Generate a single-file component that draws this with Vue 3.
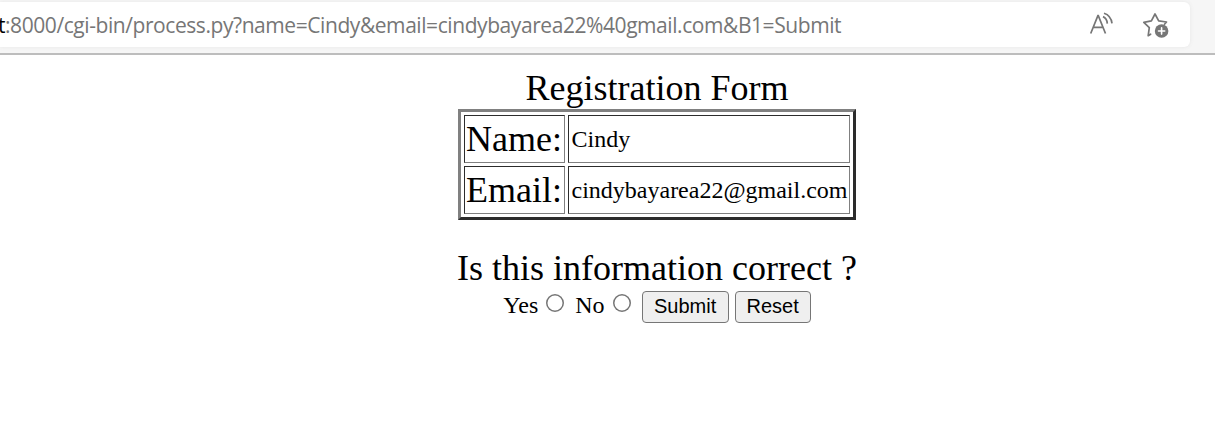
<script setup>
import { ref } from 'vue'

const rows = [
  { label: 'Name:', value: 'Cindy' },
  { label: 'Email:', value: 'cindybayarea22@gmail.com' },
]
const answer = ref('')
</script>

<template>
  <div class="window">
    <header class="toolbar">
      <div class="address">
        <div class="url"><span class="host">t</span><span class="path">:8000/cgi-bin/process.py?name=Cindy&amp;email=cindybayarea22%40gmail.com&amp;B1=Submit</span></div>
        <svg class="icon read" viewBox="0 0 26 26" width="26" height="26" fill="none" stroke="#767676" stroke-width="1.7">
          <path d="M1.7 23.5 8.9 5.7h.4l7.2 17.8M4.3 17.4h9.8" />
          <path d="M14 6.6q4 1.8 4.3 7M15 3.2q7 2.2 8 10.2" />
        </svg>
        <svg class="icon favorite" viewBox="0 0 28 28" width="28" height="28" fill="none" stroke="#767676" stroke-width="1.7" stroke-linejoin="round" stroke-linecap="round">
          <path d="M8.6 24.2 6.2 25.7l1.1-8.1L1.8 12.3l7.6-1.4L13 4l3.7 6.9 7.8 1.1-2 2.2" />
          <circle cx="19.6" cy="21" r="6.8" fill="#767676" stroke="none" />
          <path d="M19.6 17.9v6.2M16.5 21h6.2" stroke="#fff" stroke-width="1.6" />
        </svg>
      </div>
    </header>
    <main class="page">
      <div class="title">Registration Form</div>
      <div class="table">
        <template v-for="row in rows" :key="row.label">
          <div class="cell label">{{ row.label }}</div>
          <div class="cell">{{ row.value }}</div>
        </template>
      </div>
      <div class="question">Is this information correct ?</div>
      <form class="controls" @submit.prevent>
        <label for="yes">Yes</label>
        <input id="yes" v-model="answer" type="radio" value="yes" />
        <label for="no">No</label>
        <input id="no" v-model="answer" type="radio" value="no" />
        <button class="submit" type="submit">Submit</button>
        <button class="reset" type="reset">Reset</button>
      </form>
    </main>
  </div>
</template>

<style>
body {
  background: #fff;
}
</style>

<style scoped>
.window {
  width: 1215px;
  height: 431px;
  overflow: hidden;
  box-sizing: border-box;
  background: #fff;
  color: #000;
  font: 24px/27px "Liberation Serif", serif;
}
.toolbar {
  box-sizing: border-box;
  height: 55px;
  padding-top: 2px;
  background: #f6f6f6;
  border-bottom: 2px solid #bdbdbd;
}
.address {
  display: flex;
  align-items: flex-start;
  width: 1190px;
  height: 45px;
  background: #fff;
  border-radius: 0 6px 6px 0;
  box-shadow: 0 0 4px #e6e6e6;
}
.url {
  width: 1088px;
  margin-left: -2px;
  font: 21px/47px "Open Sans", "Noto Sans", sans-serif;
  letter-spacing: -0.43px;
  color: #767676;
  white-space: nowrap;
}
.host {
  display: inline-block;
  width: 7px;
  color: #000;
}
.icon {
  flex: none;
}
.read {
  margin: 8px 0 0 3px;
}
.favorite {
  margin: 8px 0 0 27px;
}
.page {
  display: flex;
  flex-direction: column;
  align-items: center;
  width: 1314px;
  padding-top: 13px;
}
.title,
.question {
  font-size: 36px;
  line-height: 41px;
  white-space: nowrap;
}
.table {
  display: grid;
  grid-template-columns: 101px 282px;
  grid-auto-rows: 48px;
  gap: 3px;
  padding: 3px;
  border: 3px solid;
  border-color: #808080 #2c2c2c #2c2c2c #808080;
}
.cell {
  display: flex;
  align-items: center;
  padding-left: 2.5px;
  border: 1px solid;
  border-color: #2c2c2c #808080 #808080 #2c2c2c;
}
.label {
  padding-left: 1px;
  font-size: 36px;
  line-height: 41px;
}
.question {
  margin-top: 28px;
}
.controls {
  display: flex;
  align-items: center;
  margin-top: 2px;
  height: 32px;
}
.controls label {
  margin-bottom: 4px;
}
input {
  appearance: none;
  box-sizing: border-box;
  width: 18px;
  height: 18px;
  margin: 0 11px 8px 8px;
  border: 0;
  border-radius: 50%;
  background: #fff;
  box-shadow: inset 0 0 0 1.5px #767676;
}
button {
  box-sizing: border-box;
  height: 32px;
  padding: 0 0 2px;
  border: 1px solid #767676;
  border-radius: 4px;
  background: #efefef;
  color: #000;
  font: 20px/28px "Liberation Sans", Arial, sans-serif;
}
.submit {
  width: 87px;
  margin-right: 6px;
}
.reset {
  width: 76px;
}
</style>
